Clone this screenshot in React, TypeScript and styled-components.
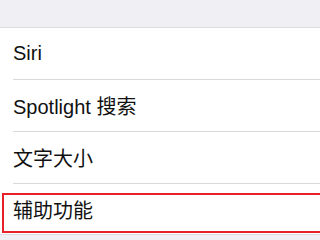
import React from "react";
import styled, { createGlobalStyle } from "styled-components";

const Global = createGlobalStyle`
  html, body { margin: 0; padding: 0; background: #efeff4; overflow: hidden; }
  body { font-family: "Liberation Sans", "Noto Sans CJK SC", sans-serif; }
`;

const Page = styled.div`
  width: 320px;
  height: 240px;
  display: flex;
  flex-direction: column;
  background: #efeff4;
  overflow: hidden;
`;

const TopGap = styled.div`
  height: 27px;
  flex: none;
`;

const Group = styled.div`
  background: #ffffff;
  border-top: 1px solid #dedee2;
  border-bottom: 1px solid #dedee2;
  display: flex;
  flex-direction: column;
`;

const Row = styled.div<{ $last?: boolean }>`
  position: relative;
  height: ${(p) => (p.$last ? 50 : 51)}px;
  display: flex;
  align-items: center;
  padding-left: 13px;
  font-size: 20px;
  color: #111111;
  border-bottom: ${(p) => (p.$last ? "none" : "1px solid #d9d9dd")};
  margin-left: ${(p) => (p.$last ? 0 : 0)}px;
  box-sizing: content-box;
  ${(p) =>
    p.$last
      ? ""
      : `
    border-bottom: none;
    &::after {
      content: "";
      position: absolute;
      left: 13px;
      right: 0;
      bottom: -1px;
      height: 1px;
      background: #d9d9dd;
    }
    margin-bottom: 1px;
  `}
`;

const Highlight = styled.div`
  position: absolute;
  left: 2px;
  right: -10px;
  top: 9px;
  height: 36px;
  border: 2px solid #e8202a;
  pointer-events: none;
`;

export default function App() {
  return (
    <>
      <Global />
      <Page>
        <TopGap />
        <Group>
          <Row>Siri</Row>
          <Row>Spotlight 搜索</Row>
          <Row>文字大小</Row>
          <Row $last>
            辅助功能
            <Highlight />
          </Row>
        </Group>
      </Page>
    </>
  );
}
